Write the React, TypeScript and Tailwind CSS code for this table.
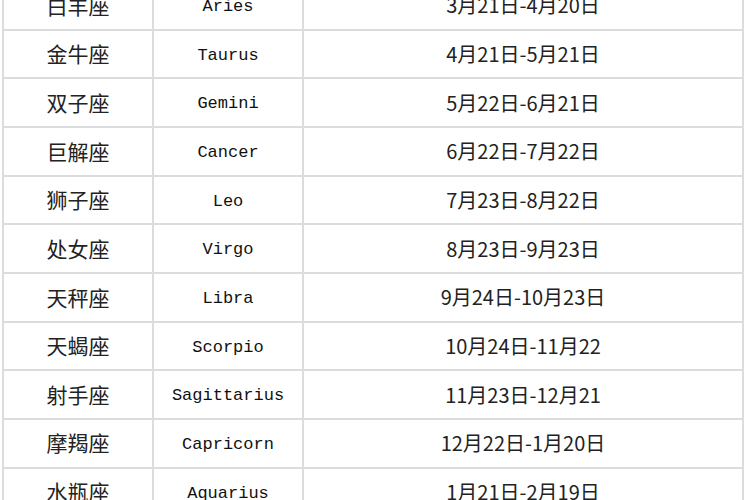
import React from 'react';

const rows: [string, string, string][] = [
  ['白羊座', 'Aries', '3月21日-4月20日'],
  ['金牛座', 'Taurus', '4月21日-5月21日'],
  ['双子座', 'Gemini', '5月22日-6月21日'],
  ['巨解座', 'Cancer', '6月22日-7月22日'],
  ['狮子座', 'Leo', '7月23日-8月22日'],
  ['处女座', 'Virgo', '8月23日-9月23日'],
  ['天秤座', 'Libra', '9月24日-10月23日'],
  ['天蝎座', 'Scorpio', '10月24日-11月22'],
  ['射手座', 'Sagittarius', '11月23日-12月21'],
  ['摩羯座', 'Capricorn', '12月22日-1月20日'],
  ['水瓶座', 'Aquarius', '1月21日-2月19日'],
];

export default function App() {
  return (
    <div className="w-[750px] h-[500px] overflow-hidden bg-white">
      <div className="-mt-[18px] ml-[2px] w-[742px] border-l-2 border-r-2 border-[#dcdcdc]">
        {rows.map(([cn, en, date]) => (
          <div key={en} className="flex h-[48.67px] border-b-2 border-[#dcdcdc] text-[#222]">
            <div
              className="w-[150px] flex items-center justify-center border-r-2 border-[#dcdcdc] text-[21px]"
              style={{ fontFamily: '"Noto Sans CJK SC", sans-serif' }}
            >
              {cn}
            </div>
            <div
              className="w-[150px] flex items-center justify-center pt-[3px] border-r-2 border-[#dcdcdc] text-[17px] text-[#111]"
              style={{ fontFamily: '"Liberation Mono", monospace' }}
            >
              {en}
            </div>
            <div
              className="flex-1 flex items-center justify-center text-[20px]"
              style={{ fontFamily: '"Noto Sans CJK SC", sans-serif' }}
            >
              {date}
            </div>
          </div>
        ))}
      </div>
    </div>
  );
}
